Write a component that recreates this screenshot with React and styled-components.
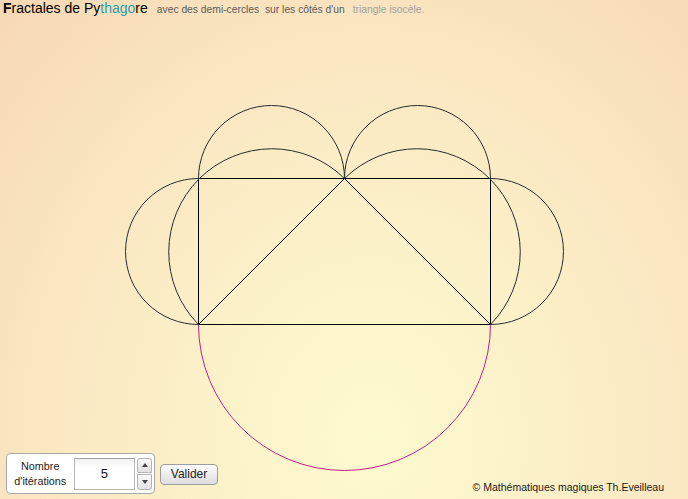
import React from "react";
import styled, { createGlobalStyle } from "styled-components";

const Global = createGlobalStyle`
  html, body { margin: 0; padding: 0; }
  body {
    width: 688px;
    height: 499px;
    overflow: hidden;
    font-family: "Liberation Sans", Arial, sans-serif;
  }
`;

const Page = styled.div`
  width: 688px;
  height: 499px;
  display: grid;
  grid-template-rows: 20px 1fr auto;
  background: radial-gradient(farthest-corner at 54% 88%, #fefad0 0%, #fcf2ca 30%, #fae8c3 60%, #f9e0bc 80%, #f7d8b5 100%);
`;

const Header = styled.header`
  display: flex;
  align-items: baseline;
  padding: 0 0 0 3px;
  height: 20px;
  line-height: 16px;
  white-space: nowrap;
`;

const Title = styled.h1`
  margin: 0;
  font-size: 14px;
  font-weight: normal;
  color: #000;
`;

const Initial = styled.span`
  font-weight: bold;
`;

const Accent = styled.span`
  color: #2d9fac;
`;

const Sub = styled.span`
  font-size: 10.3px;
  color: ${(p) => (p.$light ? "#a0a0a0" : "#5a5a5a")};
  margin-left: ${(p) => p.$gap}px;
`;

const Stage = styled.div`
  position: relative;
  min-height: 0;
`;

const Drawing = styled.svg`
  display: block;
  overflow: visible;
`;

const Footer = styled.footer`
  display: flex;
  align-items: flex-end;
  justify-content: space-between;
  padding: 0 24px 5px 6px;
`;

const Controls = styled.div`
  display: flex;
  align-items: center;
  gap: 5px;
`;

const Group = styled.div`
  box-sizing: border-box;
  width: 149px;
  height: 41px;
  border: 1px solid #a9a9a9;
  border-radius: 4px;
  background: #fff;
  display: flex;
  align-items: center;
  padding: 0 2px 0 0;
`;

const Label = styled.div`
  width: 67px;
  text-align: center;
  font-size: 10.8px;
  line-height: 15px;
  color: #222;
  padding-top: 1px;
`;

const Field = styled.div`
  box-sizing: border-box;
  width: 62px;
  height: 32px;
  border: 1px solid #b8b8b8;
  border-top-color: #a0a0a0;
  background: linear-gradient(#f2f2f2, #fff 30%);
  display: flex;
  align-items: center;
  justify-content: center;
  font-size: 13px;
  color: #111;
`;

const Spinner = styled.div`
  margin-left: 2px;
  width: 15px;
  height: 32px;
  display: flex;
  flex-direction: column;
  gap: 1px;
`;

const SpinBtn = styled.div`
  flex: 1;
  box-sizing: border-box;
  border: 1px solid #b4b4b4;
  border-radius: ${(p) => (p.$up ? "3px 3px 0 0" : "0 0 3px 3px")};
  background: linear-gradient(#fbfbfb, #e2e2e2);
  display: flex;
  align-items: center;
  justify-content: center;
  &::after {
    content: "";
    border-left: 3px solid transparent;
    border-right: 3px solid transparent;
    ${(p) =>
      p.$up ? "border-bottom: 4px solid #444;" : "border-top: 4px solid #444;"}
  }
`;

const Button = styled.button`
  box-sizing: border-box;
  width: 58px;
  height: 21px;
  margin-top: 1px;
  border: 1px solid #9e9e9e;
  border-radius: 4px;
  background: linear-gradient(#fdfdfd, #ececec 55%, #dedede);
  font-family: "Liberation Sans", Arial, sans-serif;
  font-size: 12px;
  color: #222;
  padding: 0;
`;

const Credit = styled.div`
  font-size: 10.5px;
  color: #1a1a1a;
  line-height: 14px;
`;

const L = 198.5, R = 490.5, T = 158.5, B = 304.5, M = 344.5;
const rLeg = 103.24;
const rSmall = 73;

function Fractal() {
  return (
    <Drawing width="688" height="439" viewBox="0 0 688 439">
      <g fill="none" stroke="#000" strokeWidth="1">
        <line x1={L} y1={T} x2={R} y2={T} />
        <line x1={L} y1={T} x2={L} y2={B} />
        <line x1={R} y1={T} x2={R} y2={B} />
        <line x1={L} y1={B} x2={R} y2={B} />
        <line x1={L} y1={B} x2={M} y2={T} />
        <line x1={M} y1={T} x2={R} y2={B} />
      </g>
      <g fill="none" stroke="#2b2b2b" strokeWidth="1">
        <path d={`M ${L} ${B} A ${rLeg} ${rLeg} 0 0 1 ${M} ${T}`} />
        <path d={`M ${M} ${T} A ${rLeg} ${rLeg} 0 0 1 ${R} ${B}`} />
        <path d={`M ${L} ${T} A ${rSmall} ${rSmall} 0 0 1 ${M} ${T}`} />
        <path d={`M ${M} ${T} A ${rSmall} ${rSmall} 0 0 1 ${R} ${T}`} />
        <path d={`M ${L} ${B} A ${rSmall} ${rSmall} 0 0 1 ${L} ${T}`} />
        <path d={`M ${R} ${T} A ${rSmall} ${rSmall} 0 0 1 ${R} ${B}`} />
      </g>
      <path
        d={`M ${L} ${B} A 146 146 0 0 0 ${R} ${B}`}
        fill="none"
        stroke="#c21f86"
        strokeWidth="1"
      />
    </Drawing>
  );
}

export default function App() {
  return (
    <>
      <Global />
      <Page>
        <Header>
          <Title>
            <Initial>F</Initial>ractales de Py<Accent>thago</Accent>re
          </Title>
          <Sub $gap={9}>avec des demi-cercles&nbsp; sur les côtés d'un</Sub>
          <Sub $gap={8} $light>triangle isocèle.</Sub>
        </Header>
        <Stage>
          <Fractal />
        </Stage>
        <Footer>
          <Controls>
            <Group>
              <Label>
                Nombre
                <br />
                d'itérations
              </Label>
              <Field>5</Field>
              <Spinner>
                <SpinBtn $up />
                <SpinBtn />
              </Spinner>
            </Group>
            <Button>Valider</Button>
          </Controls>
          <Credit>© Mathématiques magiques Th.Eveilleau</Credit>
        </Footer>
      </Page>
    </>
  );
}
